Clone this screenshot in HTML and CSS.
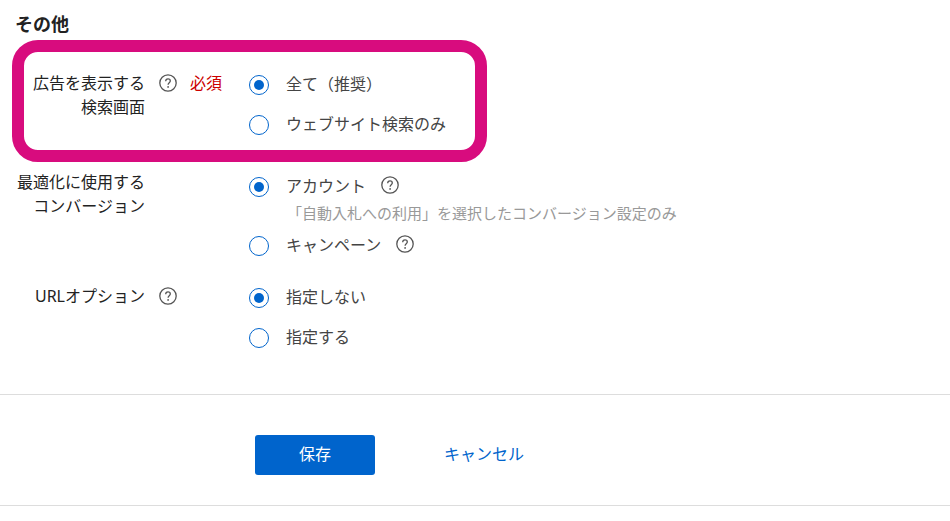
FILE: index.html
```html
<!DOCTYPE html>
<html lang="ja">

<head>
    <meta charset="UTF-8">
    <meta name="viewport" content="width=device-width, initial-scale=1.0">
    <title>その他</title>
    <link rel="stylesheet" href="styles.css">
</head>

<body>
    <svg class="sprite" aria-hidden="true">
        <symbol id="icon-help" viewBox="0 0 18 18">
            <circle cx="9" cy="9" r="8.2" fill="none" stroke="currentColor" stroke-width="1.3" />
            <path d="M6.7 7.2C6.7 5.7 7.6 4.8 9 4.8s2.3.9 2.3 2.1c0 1.7-2.2 1.9-2.2 3.8" fill="none" stroke="currentColor" stroke-width="1.3" />
            <circle cx="9.1" cy="12.9" r="0.9" fill="currentColor" />
        </symbol>
    </svg>

    <form>
        <section class="settings">
            <h2>その他</h2>

            <!-- Search screens -->
            <div class="row highlight" role="radiogroup" aria-labelledby="label-screen">
                <div class="label" id="label-screen">広告を表示する<br>検索画面</div>
                <div class="info">
                    <button type="button" class="help" aria-label="ヘルプ"><svg><use href="#icon-help" /></svg></button>
                    <span class="required">必須</span>
                </div>
                <div class="options">
                    <div class="option">
                        <input type="radio" name="screen" id="screen-all" checked>
                        <label for="screen-all">全て（推奨）</label>
                    </div>
                    <div class="option">
                        <input type="radio" name="screen" id="screen-web">
                        <label for="screen-web">ウェブサイト検索のみ</label>
                    </div>
                </div>
            </div>

            <!-- Conversions -->
            <div class="row conversion" role="radiogroup" aria-labelledby="label-conversion">
                <div class="label" id="label-conversion">最適化に使用する<br>コンバージョン</div>
                <div class="info"></div>
                <div class="options">
                    <div class="option">
                        <input type="radio" name="conversion" id="conversion-account" checked>
                        <label for="conversion-account">アカウント</label>
                        <button type="button" class="help" aria-label="ヘルプ"><svg><use href="#icon-help" /></svg></button>
                    </div>
                    <p class="hint">「自動入札への利用」を選択したコンバージョン設定のみ</p>
                    <div class="option">
                        <input type="radio" name="conversion" id="conversion-campaign">
                        <label for="conversion-campaign">キャンペーン</label>
                        <button type="button" class="help" aria-label="ヘルプ"><svg><use href="#icon-help" /></svg></button>
                    </div>
                </div>
            </div>

            <!-- URL options -->
            <div class="row" role="radiogroup" aria-labelledby="label-url">
                <div class="label" id="label-url">URLオプション</div>
                <div class="info">
                    <button type="button" class="help" aria-label="ヘルプ"><svg><use href="#icon-help" /></svg></button>
                </div>
                <div class="options">
                    <div class="option">
                        <input type="radio" name="url" id="url-off" checked>
                        <label for="url-off">指定しない</label>
                    </div>
                    <div class="option">
                        <input type="radio" name="url" id="url-on">
                        <label for="url-on">指定する</label>
                    </div>
                </div>
            </div>
        </section>

        <div class="actions">
            <button type="submit" class="save">保存</button>
            <a href="#" class="cancel">キャンセル</a>
        </div>
    </form>
</body>

</html>
```
FILE: styles.css
```css
* {
    box-sizing: border-box;
}

body {
    margin: 0;
    background-color: #fff;
    color: #222;
    font-family: "Noto Sans", "Noto Sans CJK JP", sans-serif;
    font-size: 16px;
    line-height: 24px;
}

.sprite {
    display: none;
}

.settings {
    padding: 12px 15px 44px;
}

h2 {
    margin: 0 0 35px;
    font-size: 18px;
    font-weight: 700;
    line-height: 24px;
}

.row {
    position: relative;
    display: grid;
    grid-template-columns: 130px 104px 1fr;
    margin-bottom: 26px;
}

.row:last-child {
    margin-bottom: 0;
}

.row.highlight {
    margin-bottom: 35px;
}

/* marker frame drawn round the row */
.highlight::after {
    content: "";
    position: absolute;
    box-sizing: border-box;
    top: -31px;
    bottom: -27px;
    left: -3px;
    width: 475px;
    border: 12px solid #d80c7e;
    border-radius: 26px;
    pointer-events: none;
}

.label {
    text-align: right;
    white-space: nowrap;
}

.info {
    display: flex;
    align-items: center;
    gap: 13px;
    height: 24px;
    padding-left: 14px;
}

.required {
    color: #c00;
}

.options {
    display: flex;
    flex-direction: column;
    gap: 16px;
    padding-bottom: 2px;
}

.highlight .options {
    padding-bottom: 0;
}

.conversion .options {
    gap: 0;
    padding-top: 3px;
}

.option {
    display: flex;
    align-items: center;
    height: 24px;
    color: #444;
}

.option label {
    padding: 2px 0 0 17px;
}

.option .help {
    margin-left: 15px;
}

.hint {
    margin: 4px 0 7px;
    padding-left: 38px;
    color: #999;
    font-size: 15px;
}

input[type="radio"] {
    appearance: none;
    width: 20px;
    height: 20px;
    margin: 4px 0 0;
    border: 1px solid #0064cc;
    border-radius: 50%;
    background-color: #fff;
}

input[type="radio"]:checked {
    padding: 4px;
    background-color: #0064cc;
    background-clip: content-box;
}

.help {
    width: 18px;
    height: 18px;
    padding: 0;
    border: none;
    background: none;
    color: #555;
    cursor: pointer;
}

.help svg {
    display: block;
    width: 18px;
    height: 18px;
}

.actions {
    display: flex;
    align-items: center;
    gap: 69px;
    padding: 40px 255px 30px;
    border-top: 1px solid #ddd;
    border-bottom: 1px solid #ddd;
}

.save {
    width: 120px;
    height: 40px;
    padding: 0 0 2px;
    border: none;
    border-radius: 3px;
    background-color: #0064cc;
    color: #fff;
    font: inherit;
    cursor: pointer;
}

.save:hover {
    background-color: #0056b0;
}

.cancel {
    padding-bottom: 2px;
    color: #0064cc;
    text-decoration: none;
    white-space: nowrap;
}

.cancel:hover {
    text-decoration: underline;
}
```
